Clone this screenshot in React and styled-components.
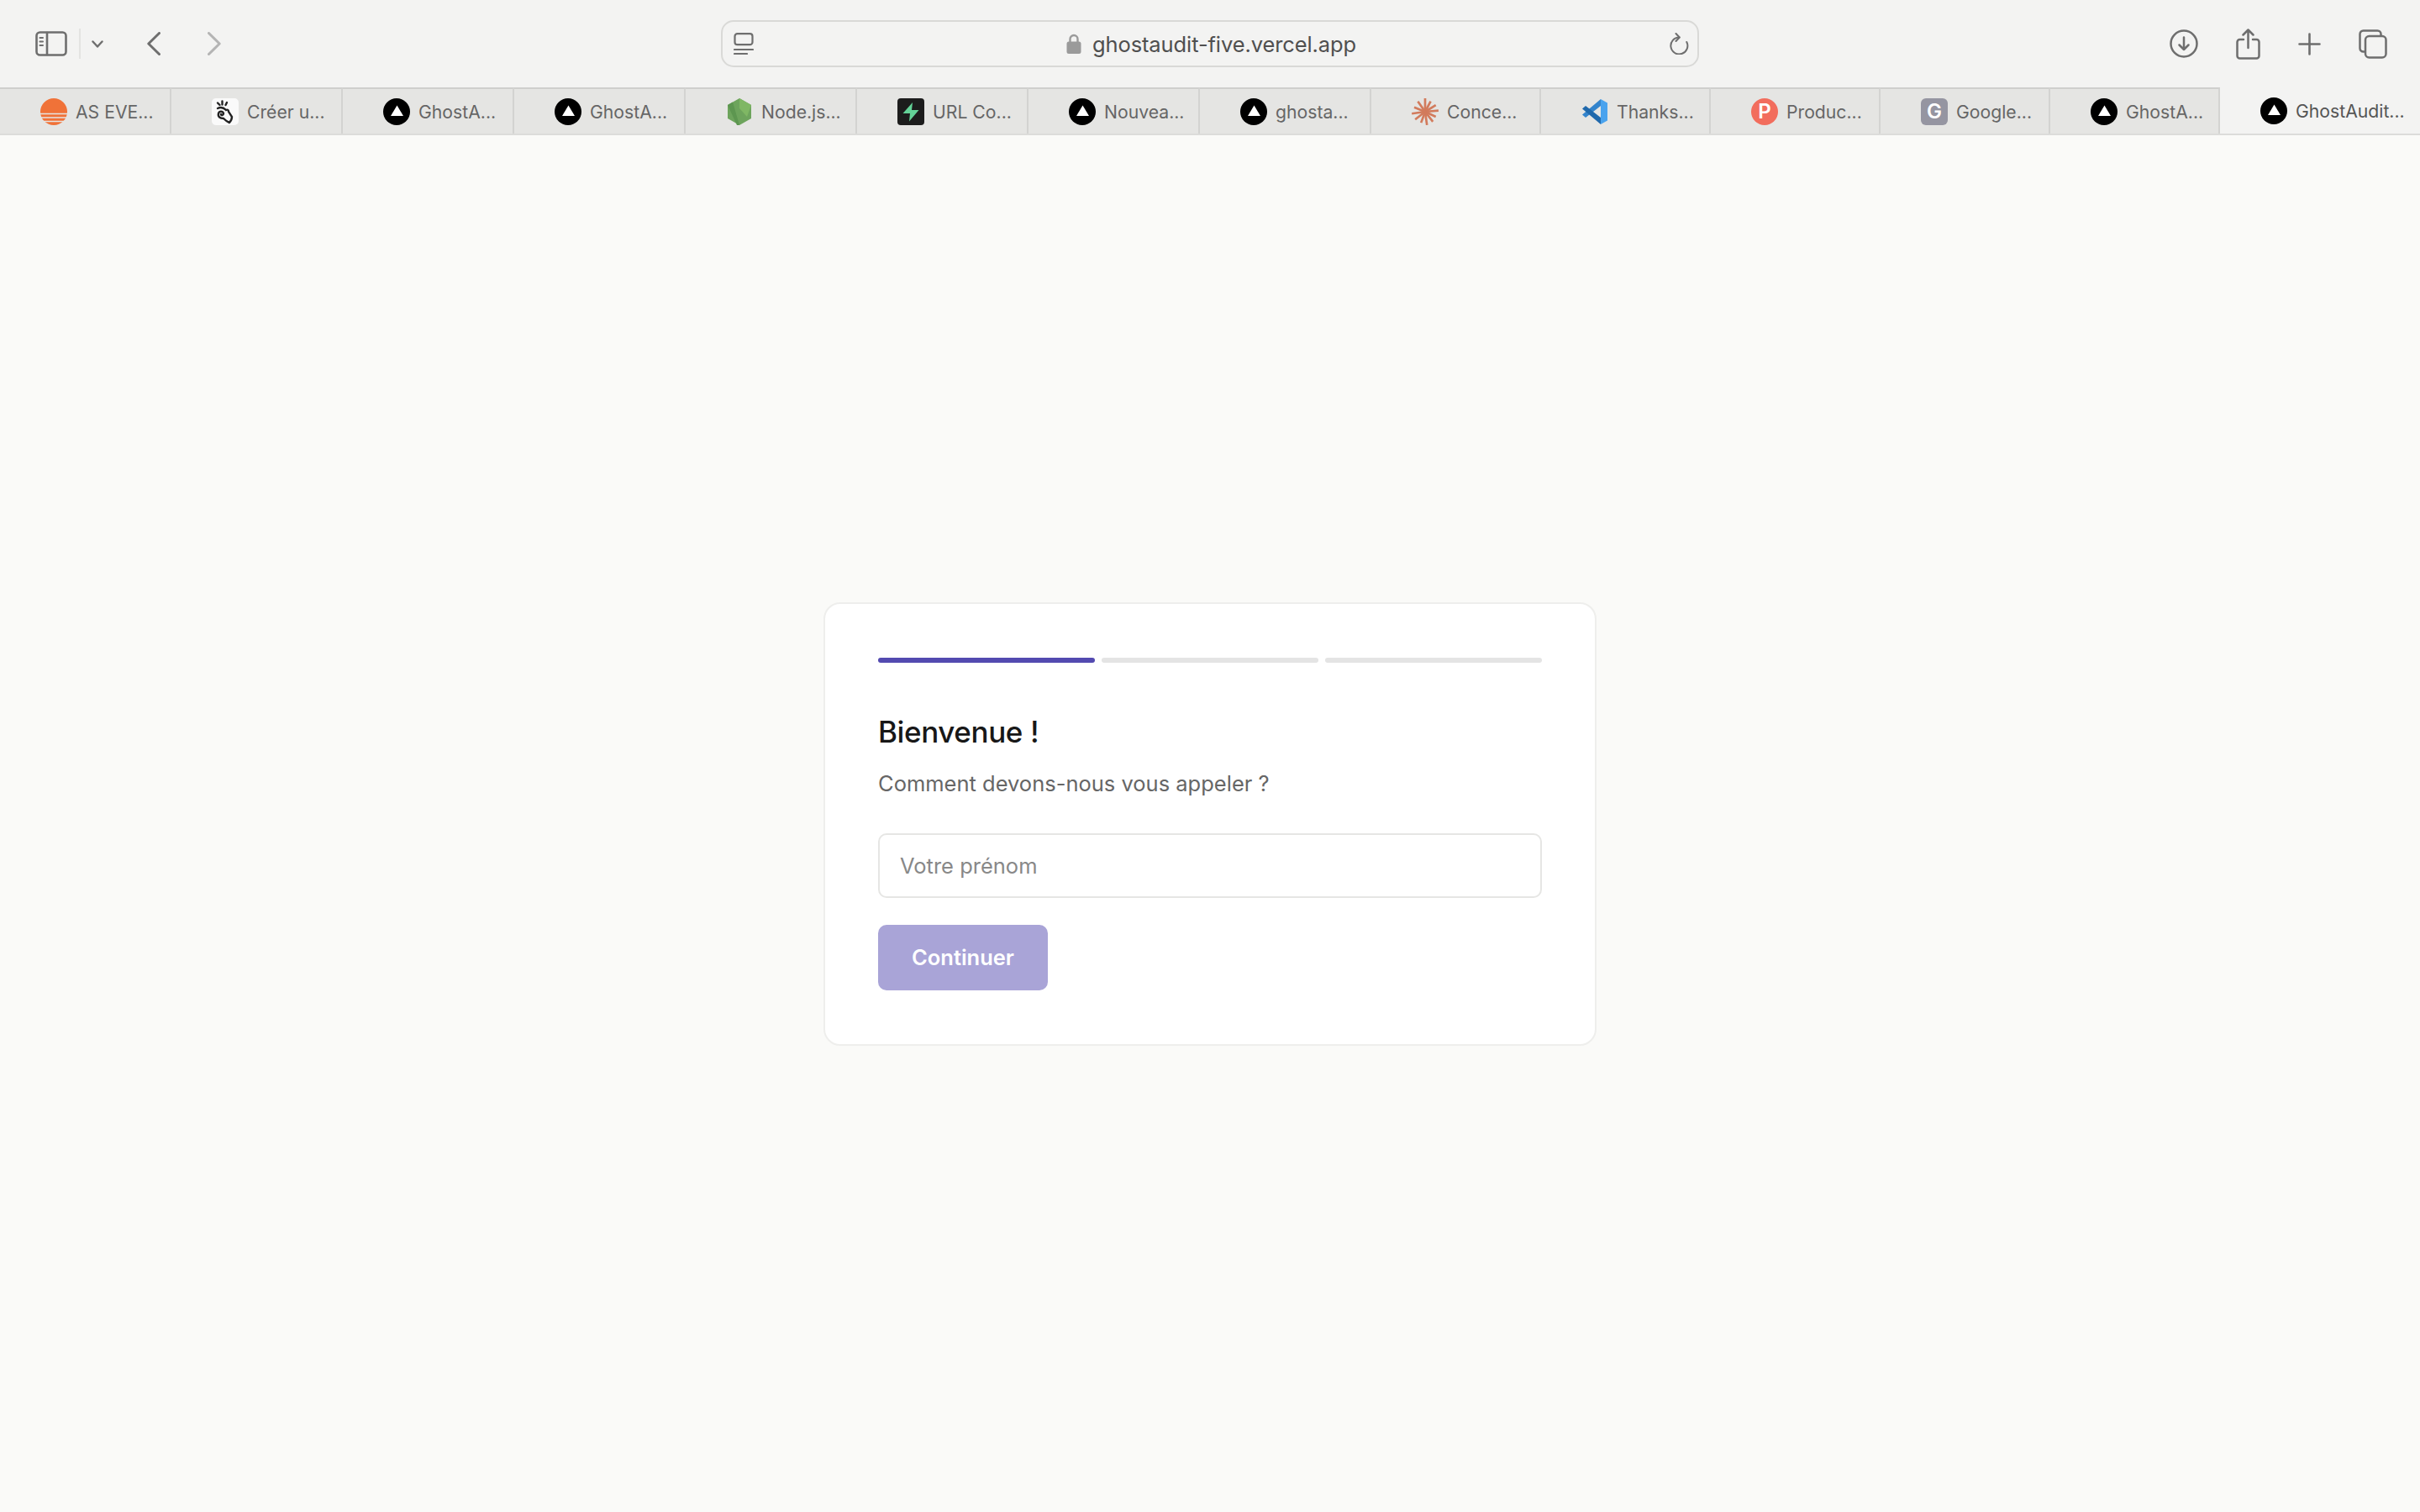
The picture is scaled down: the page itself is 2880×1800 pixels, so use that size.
import React from "react"
import styled, { createGlobalStyle } from "styled-components"

const GlobalStyle = createGlobalStyle`
  * {
    box-sizing: border-box;
  }
  html,
  body {
    margin: 0;
    padding: 0;
    background: #fafaf8;
    font-family: Inter, "Liberation Sans", sans-serif;
  }
`

const Page = styled.div`
  width: 2880px;
  height: 1800px;
  display: flex;
  flex-direction: column;
  overflow: hidden;
`

const Toolbar = styled.div`
  height: 104px;
  flex: none;
  display: grid;
  grid-template-columns: 858px 1164px 1fr;
  align-items: center;
  background: #f3f3f2;
`

const NavGroup = styled.div`
  display: flex;
  align-items: center;
  padding-left: 42px;

  svg {
    display: block;
    flex: none;
  }
`

const SidebarDivider = styled.span`
  width: 2px;
  height: 36px;
  background: #e3e3e1;
  margin: 0 13px 0 14px;
`

const BackIcon = styled.svg`
  margin-left: 52px;
`

const ForwardIcon = styled.svg`
  margin-left: 56px;
`

const UrlBar = styled.div`
  height: 56px;
  display: flex;
  align-items: center;
  justify-content: space-between;
  padding: 0 10px 0 13px;
  border: 2px solid #d9d9d7;
  border-radius: 15px;
  background: #f3f3f2;
`

const UrlCenter = styled.div`
  display: flex;
  align-items: center;
  gap: 13px;
  font-size: 25.5px;
  color: #4f4f4f;
  letter-spacing: -0.1px;
`

const ActionGroup = styled.div`
  display: flex;
  align-items: center;
  justify-content: flex-end;
  gap: 45px;
  padding-right: 39px;

  svg {
    display: block;
  }
`

const TabBar = styled.div`
  height: 57px;
  flex: none;
  display: flex;
  background: #f3f3f2;
  border-bottom: 2px solid #dcdcda;
`

const Tab = styled.div`
  width: ${(p) => (p.$active ? "auto" : `${p.$wide ? 204 : 202}px`)};
  flex: ${(p) => (p.$active ? "1" : "none")};
  display: flex;
  align-items: center;
  gap: 10px;
  padding-left: 48px;
  height: 55px;
  background: ${(p) => (p.$active ? "#f3f3f2" : "#e5e5e3")};
  border-top: ${(p) => (p.$active ? "none" : "2px solid #cfcfcd")};
  border-right: ${(p) => (p.$active ? "none" : "2px solid #d3d3d1")};
  font-size: 21.2px;
  color: ${(p) => (p.$active ? "#555" : "#666")};
  white-space: nowrap;

  svg {
    display: block;
    flex: none;
  }
`

const LetterIcon = styled.span`
  width: 32px;
  height: 32px;
  flex: none;
  display: flex;
  align-items: center;
  justify-content: center;
  border-radius: ${(p) => p.$radius};
  background: ${(p) => p.$color};
  color: #fff;
  font-size: 24px;
  font-weight: 600;
`

const Main = styled.main`
  flex: 1;
  display: flex;
  align-items: center;
  justify-content: center;
  background: #fafaf8;
`

const Card = styled.div`
  width: 920px;
  padding: 64px 63px 64px;
  background: #fff;
  border: 2px solid #eeeeec;
  border-radius: 20px;
`

const Steps = styled.div`
  display: grid;
  grid-template-columns: repeat(3, 1fr);
  gap: 8px;
`

const Step = styled.div`
  height: 6px;
  border-radius: 3px;
  background: ${(p) => (p.$done ? "#534ab0" : "#e4e4e4")};
`

const Title = styled.h1`
  margin: 60px 0 0;
  font-size: 35px;
  line-height: 44px;
  font-weight: 500;
  letter-spacing: -0.4px;
  color: #171717;
`

const Subtitle = styled.p`
  margin: 20px 0 0;
  font-size: 25.5px;
  line-height: 40px;
  color: #666;
`

const NameInput = styled.input`
  display: block;
  width: 100%;
  height: 77px;
  margin-top: 39px;
  padding: 0 24px;
  border: 2px solid #e6e6e4;
  border-radius: 10px;
  background: #fff;
  font-family: inherit;
  font-size: 25.5px;
  outline: none;

  &::placeholder {
    color: #888;
    opacity: 1;
  }
`

const ContinueButton = styled.button`
  display: block;
  width: 202px;
  height: 78px;
  margin-top: 32px;
  border: none;
  border-radius: 10px;
  background: #a9a4d7;
  color: #fff;
  font-family: inherit;
  font-size: 25.5px;
  font-weight: 600;
`

const chrome = {
  fill: "none",
  stroke: "#6e6e6e",
  strokeLinecap: "round",
  strokeLinejoin: "round",
}

const SidebarIcon = () => (
  <svg width="38" height="30" viewBox="0 0 38 30" {...chrome} strokeWidth="2.6">
    <rect x="1.5" y="1.5" width="35" height="27" rx="4" />
    <path d="M14 2v26" />
    <path d="M5.5 8h3.5M5.5 12.5h3.5M5.5 17h3.5" strokeWidth="2" />
  </svg>
)

const ChevronDown = () => (
  <svg width="14" height="9" viewBox="0 0 14 9" {...chrome} strokeWidth="2.4">
    <path d="M1.5 1.5 7 7.5l5.5-6" />
  </svg>
)

const ReaderIcon = () => (
  <svg width="24" height="26" viewBox="0 0 24 26" {...chrome} strokeWidth="2.2">
    <rect x="1.5" y="1.2" width="21" height="13" rx="3" />
    <path d="M1 20h22" />
    <path d="M1 25h15" />
  </svg>
)

const LockIcon = () => (
  <svg width="18" height="24" viewBox="0 0 18 24">
    <path
      d="M4.5 10V6.500a4.500 4.500 0 0 1 9 0V10"
      fill="none"
      stroke="#9a9a9a"
      strokeWidth="2.4"
    />
    <rect x="0.500" y="9.500" width="17" height="14.500" rx="2.500" fill="#9a9a9a" />
  </svg>
)

const ReloadIcon = () => (
  <svg width="24" height="26" viewBox="0 0 24 26" {...chrome} strokeWidth="2">
    <path d="M12.500 5.500A10 10 0 1 0 21.300 11" />
    <path d="M8.500 1 12.800 5.500 8.500 10" />
  </svg>
)

const DownloadIcon = () => (
  <svg width="34" height="34" viewBox="0 0 34 34" {...chrome} strokeWidth="2.500">
    <circle cx="17" cy="17" r="15.500" />
    <path d="M17 9.500v14.500M11.500 18.500 17 24l5.500-5.500" />
  </svg>
)

const ShareIcon = () => (
  <svg width="29" height="37" viewBox="0 0 29 37" {...chrome} strokeWidth="2.500">
    <path d="M9 13H4.500a3 3 0 0 0-3 3v16.500a3 3 0 0 0 3 3h20a3 3 0 0 0 3-3V16a3 3 0 0 0-3-3H20" />
    <path d="M14.500 23V2M8.500 7.500l6-6 6 6" />
  </svg>
)

const PlusIcon = () => (
  <svg width="27" height="27" viewBox="0 0 27 27" {...chrome} strokeWidth="2.600">
    <path d="M13.500 1.500v24M1.500 13.500h24" />
  </svg>
)

const TabsIcon = () => (
  <svg width="34" height="35" viewBox="0 0 34 35" {...chrome} strokeWidth="2.500">
    <path d="M6.500 26.500h-1a4 4 0 0 1-4-4V5.500a4 4 0 0 1 4-4h17a4 4 0 0 1 4 4v2" />
    <rect x="8" y="8" width="24.500" height="25.500" rx="4.500" />
  </svg>
)

const SunsetIcon = () => (
  <svg width="32" height="32" viewBox="0 0 32 32">
    <circle cx="16" cy="16" r="16" fill="#f07238" />
    <path d="M0 18.500h32M0 23h32M0 27.500h32" stroke="#e5e5e3" strokeWidth="1.600" />
  </svg>
)

const HandIcon = () => (
  <svg width="32" height="32" viewBox="0 0 32 32">
    <rect width="32" height="32" rx="5" fill="#fafafa" />
    <g fill="none" stroke="#222" strokeWidth="2.400" strokeLinecap="round">
      <path d="M7 5.500 9.500 8M12.500 3.500v4M18 5l-1.500 3" />
      <path d="M7 12c4-2 8 0 10 2 2-1 3 0 3 2l4 6c0 3-1 5-3 7-3-1-5-3-7-5-4 0-7-2-6-6 1-3 5-3 6 0 0 2-3 3-3 1" />
    </g>
  </svg>
)

const VercelIcon = () => (
  <svg width="32" height="32" viewBox="0 0 32 32">
    <circle cx="16" cy="16" r="16" fill="#000" />
    <path d="M16.500 8.500 24 21H9z" fill="#fff" />
  </svg>
)

const NodeIcon = () => (
  <svg width="32" height="32" viewBox="0 0 32 32">
    <path d="M16 0 30 8v16l-14 8-14-8V8z" fill="#6da45c" />
    <path d="M16 0 30 8 25 22 16 12z" fill="#7fb764" />
    <path d="M2 8l11 24 3 0L8 4.500z" fill="#5d9650" />
  </svg>
)

const SupabaseIcon = () => (
  <svg width="32" height="32" viewBox="0 0 32 32">
    <rect width="32" height="32" rx="4" fill="#1c1c1c" />
    <path d="M18 5 6.500 18H15l-1 9.500L25.500 14H17z" fill="#63d297" />
  </svg>
)

const rays = [0, 28, 58, 85, 115, 142, 172, 200, 232, 262, 292, 325]

const ClaudeIcon = () => (
  <svg width="32" height="32" viewBox="0 0 32 32">
    {rays.map((angle, i) => (
      <path
        key={angle}
        d={`M16 16V${i % 3 === 0 ? 0 : i % 3 === 1 ? 2 : 1}`}
        stroke="#d27b5c"
        strokeWidth="2.700"
        transform={`rotate(${angle} 16 16)`}
      />
    ))}
  </svg>
)

const VsCodeIcon = () => (
  <svg width="32" height="32" viewBox="0 0 32 32">
    <path d="M1 19.500 23 1v8L5 23z" fill="#3384cc" />
    <path d="M1 12.500 5 9l18 14v8z" fill="#2069ac" />
    <path d="M23 1l8 4.500v21L23 31z" fill="#4aa3ee" />
  </svg>
)

const tabs = [
  { title: "AS EVE...", icon: <SunsetIcon />, wide: true },
  { title: "Créer u...", icon: <HandIcon />, wide: true },
  { title: "GhostA...", icon: <VercelIcon />, wide: true },
  { title: "GhostA...", icon: <VercelIcon />, wide: true },
  { title: "Node.js...", icon: <NodeIcon />, wide: true },
  { title: "URL Co...", icon: <SupabaseIcon />, wide: true },
  { title: "Nouvea...", icon: <VercelIcon />, wide: true },
  { title: "ghosta...", icon: <VercelIcon />, wide: true },
  { title: "Conce...", icon: <ClaudeIcon /> },
  { title: "Thanks...", icon: <VsCodeIcon /> },
  {
    title: "Produc...",
    icon: (
      <LetterIcon $color="#f26d5d" $radius="50%">
        P
      </LetterIcon>
    ),
  },
  {
    title: "Google...",
    icon: (
      <LetterIcon $color="#9595a1" $radius="6px">
        G
      </LetterIcon>
    ),
  },
  { title: "GhostA...", icon: <VercelIcon /> },
]

export default function App() {
  return (
    <>
      <GlobalStyle />
      <Page>
        <Toolbar>
          <NavGroup>
            <SidebarIcon />
            <SidebarDivider />
            <ChevronDown />
            <BackIcon width="16" height="28" viewBox="0 0 16 28" {...chrome} strokeWidth="3">
              <path d="M14.500 1.500 1.800 14l12.700 12.500" />
            </BackIcon>
            <ForwardIcon
              width="16"
              height="28"
              viewBox="0 0 16 28"
              {...chrome}
              stroke="#b4b4b4"
              strokeWidth="3"
            >
              <path d="M1.500 1.500 14.200 14 1.500 26.500" />
            </ForwardIcon>
          </NavGroup>
          <UrlBar>
            <ReaderIcon />
            <UrlCenter>
              <LockIcon />
              ghostaudit-five.vercel.app
            </UrlCenter>
            <ReloadIcon />
          </UrlBar>
          <ActionGroup>
            <DownloadIcon />
            <ShareIcon />
            <PlusIcon />
            <TabsIcon />
          </ActionGroup>
        </Toolbar>
        <TabBar>
          {tabs.map((tab, i) => (
            <Tab key={i} $wide={tab.wide}>
              {tab.icon}
              {tab.title}
            </Tab>
          ))}
          <Tab $active>
            <VercelIcon />
            GhostAudit...
          </Tab>
        </TabBar>
        <Main>
          <Card>
            <Steps>
              <Step $done />
              <Step />
              <Step />
            </Steps>
            <Title>Bienvenue !</Title>
            <Subtitle>Comment devons-nous vous appeler ?</Subtitle>
            <NameInput placeholder="Votre prénom" />
            <ContinueButton>Continuer</ContinueButton>
          </Card>
        </Main>
      </Page>
    </>
  )
}
